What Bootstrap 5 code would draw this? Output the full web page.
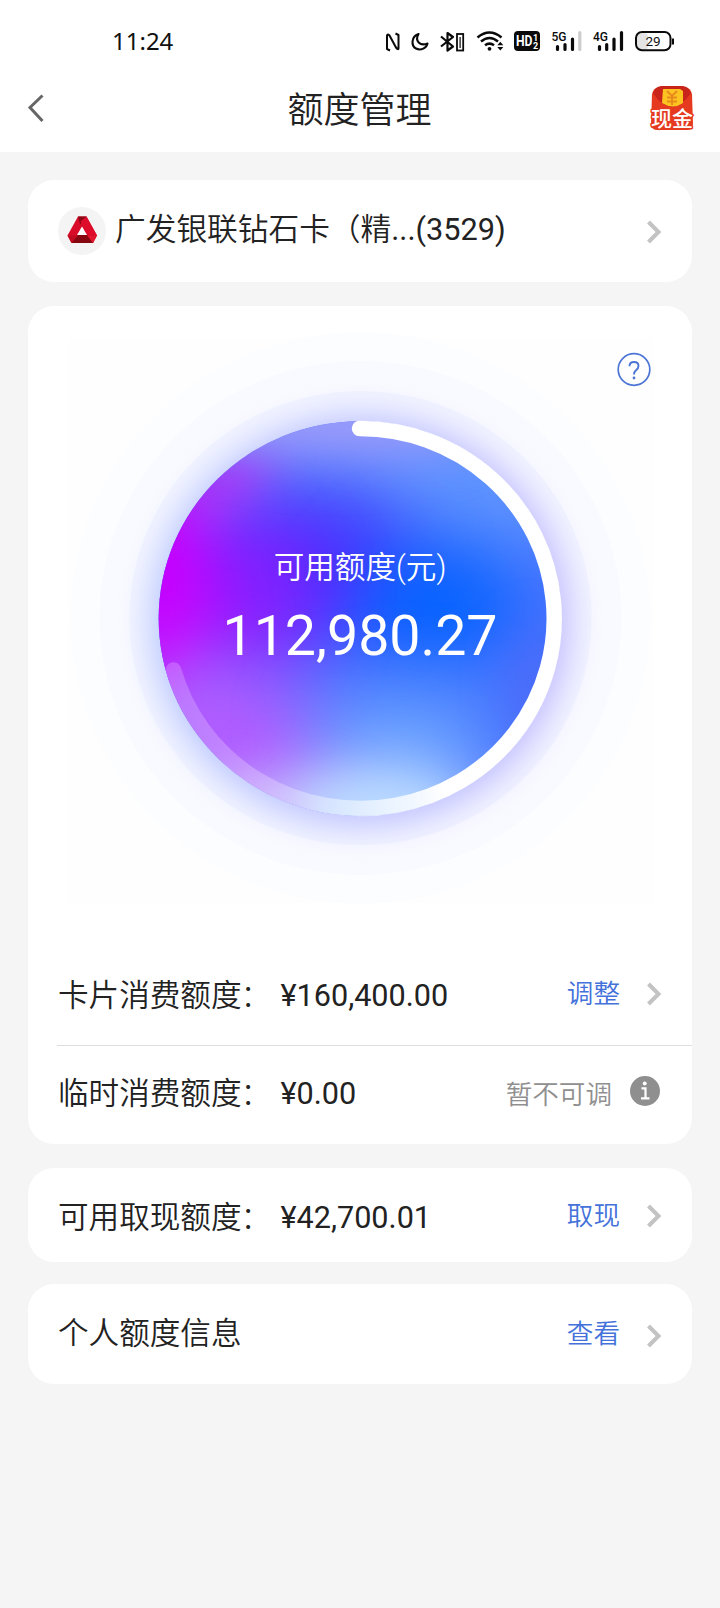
<!DOCTYPE html>
<html lang="zh-CN">
<head>
<meta charset="utf-8">
<meta name="viewport" content="width=device-width, initial-scale=1">
<title>额度管理</title>
<link href="https://cdn.jsdelivr.net/npm/bootstrap@5.3.0/dist/css/bootstrap.min.css" rel="stylesheet">
<style>
  body { background: #f5f5f5; color: #222; font-family: Roboto, "Noto Sans CJK SC", sans-serif; font-size: 30.6px; line-height: 44px; min-height: 1608px; font-weight: 400; }
  .zh { font-weight: 350; }
  .statusbar { height: 82px; padding: 0 40px 0 112px; }
  .clock { font: 400 24px/30px "Noto Sans", sans-serif; color: #111; }
  .titlebar { height: 70px; padding: 2px 24px 0 26px; }
  .titlebar h1 { font-size: 36px; line-height: 54px; font-weight: 350; }
  .panel { border: 0; border-radius: 26px; background: #fff; }
  .stack { padding: 28px 28px 0; }
  .line { padding: 0 30px; }
  .action { font-size: 26.6px; color: #4472da; font-weight: 350; text-decoration: none; }
  .muted { font-size: 26.6px; color: #8f8f8f; font-weight: 350; }
  .amount { width: 222.5px; }
  .colon { margin-left: -1px; font-weight: 300; }
  .gauge { display: grid; }
  .gauge > * { grid-area: 1 / 1; }
  .gauge filter { color-interpolation-filters: sRGB; }
  .balance { font-size: 55.5px; line-height: 62px; }
  svg { display: block; flex: none; }
</style>
</head>
<body>
<header class="bg-white">
  <div class="statusbar d-flex align-items-center justify-content-between">
    <span class="clock">11:24</span>
    <svg width="300" height="34" viewBox="380 24 300 34" fill="none" stroke="#0a0a0a">
      <!-- NFC -->
      <path d="M390 50.500L387 49V35.500Q387.500 33.500 389.500 35.500L396 47.500Q398.500 50.500 398.500 48V35L395.500 33.500" stroke-width="2" stroke-linejoin="round"/>
      <!-- moon -->
      <path d="M418.500 34C411 36.500 411 46 416 48.500C421 51 426.500 48 427.500 43.500C420 46.500 414.500 41 418.500 34Z" stroke-width="2.100" stroke-linejoin="round"/>
      <!-- bluetooth -->
      <path d="M441 36.500L453 46.500L447.500 50.500V33L453 37L441 46.500" stroke-width="2.200" stroke-linejoin="round"/>
      <rect x="457" y="34" width="6.200" height="16.500" stroke-width="1.800"/><path d="M460.100 37V48" stroke-width="1.200"/>
      <!-- wifi -->
      <path d="M477.500 37.500Q489.500 27.500 501.500 37.500M481 41.500Q489.500 34.500 498 41.500M485 45.300Q489.500 42 494 45.300" stroke-width="2.500"/>
      <circle cx="489.500" cy="48.800" r="1.900" fill="#0a0a0a" stroke="none"/>
      <path d="M497.300 45.300L500.300 41.800L503.300 45.300ZM497.300 47L500.300 50.500L503.300 47Z" fill="#0a0a0a" stroke="none"/>
      <!-- HD voice -->
      <rect x="514" y="31" width="26" height="20" rx="4" fill="#0a0a0a" stroke="none"/>
      <g fill="#fff" stroke="none" font-family="Roboto, sans-serif" font-weight="700">
        <text x="516" y="46" font-size="14" textLength="16.500" lengthAdjust="spacingAndGlyphs">HD</text>
        <text x="533" y="40.500" font-size="9">1</text><text x="533" y="48.500" font-size="9">2</text>
      </g>
      <!-- signal -->
      <g fill="#0a0a0a" stroke="none" font-family="Roboto, sans-serif" font-weight="500" font-size="12.500">
        <text x="551.500" y="41" textLength="15" lengthAdjust="spacingAndGlyphs">5G</text>
        <text x="593" y="41" textLength="15" lengthAdjust="spacingAndGlyphs">4G</text>
      </g>
      <g stroke-width="3.200" stroke-linecap="round">
        <path d="M557.500 46.500V49.500M565 44.500V49.500M572.500 39V49.500M599.500 46.500V49.500M606.700 44.500V49.500M614 39V49.500M621.500 32.500V49.500"/>
        <path d="M579.800 32.500V49.500" stroke="#ccc"/>
      </g>
      <!-- battery -->
      <rect x="637" y="33" width="11" height="17" rx="4" fill="#e4e4e4" stroke="none"/>
      <rect x="636" y="32" width="34.500" height="18.300" rx="6" stroke-width="2"/>
      <path d="M673 38.500V44.500" stroke-width="2"/>
      <text x="653" y="46" font-family="Roboto, sans-serif" font-size="13.500" text-anchor="middle" fill="#111" stroke="none">29</text>
    </svg>
  </div>
  <div class="titlebar row g-0 align-items-start">
    <div class="col-3" style="padding-top:7px"><svg width="20" height="34" viewBox="0 0 20 34" fill="none" stroke="#666" stroke-width="3"><path d="M16.500 4.500L4 16.500L16.500 30"/></svg></div>
    <h1 class="col-6 text-center mb-0" style="padding-right:3px">额度管理</h1>
    <div class="col-3 d-flex justify-content-end">
      <svg width="48" height="50" viewBox="648 84 48 50">
        <path d="M652 94Q653 88 660 87H684Q691 88 692 94L693 124Q692 130 687 130H656Q651 129 651 124Z" fill="#e63a20"/>
        <path d="M653 93Q655 87 661 86H683Q689 87 691 93Q682 106 672 107Q661 106 653 93Z" fill="#c9251a"/>
        <path d="M663 89H680L683 91V103Q673 110 662 103Z" fill="#fdc321"/>
        <path d="M667 91L672 96L677 91M672 96V105M667 97.500H677M667 101.500H677" fill="none" stroke="#e8891c" stroke-width="1.900"/>
        <text x="672" y="126" text-anchor="middle" font-family="'Noto Sans CJK SC', sans-serif" font-size="21" font-weight="500" fill="#fff" stroke="#e63a20" stroke-width="3" paint-order="stroke" stroke-linejoin="round">现金</text>
      </svg>
    </div>
  </div>
</header>

<main class="stack">
  <section class="panel card flex-row align-items-center line" style="height:102px">
    <svg width="48" height="48" viewBox="0 0 48 48">
      <circle cx="24" cy="24" r="24" fill="#f4f4f4"/>
      <path d="M20 9.500H28.500L39 28.500L35 36H13.500L9.500 28.500Z" fill="#d80c28"/>
      <path d="M20 9.500H28.500L25.500 15.500L22 17Z" fill="#8a0713"/>
      <path d="M28.500 9.500L39 28.500L30 29L22.500 14.500Z" fill="#dd0c2b"/>
      <path d="M13.500 36L19 28H30L35 36Z" fill="#86070f"/>
      <path d="M9.500 28.500L13.500 36L20 28.500Z" fill="#c00a20"/>
      <path d="M39 28.500L35 36L29 28.500Z" fill="#e0162e"/>
      <path d="M24 19.500L29 28H19Z" fill="#fff"/>
    </svg>
    <span class="zh" style="margin:0 0 2px 9px;font-size:30.700px">广发银联钻石卡（精<span class="fw-normal">...(3529)</span></span>
    <svg class="ms-auto" style="margin-top:2px" width="16" height="24" viewBox="0 0 16 24" fill="none" stroke="#c3c3c3" stroke-width="4"><path d="M2.500 2L12.500 12L2.500 22"/></svg>
  </section>

  <section class="panel card overflow-hidden" style="margin-top:24px;height:838px">
    <div class="gauge">
      <svg width="664" height="640" viewBox="28 306 664 640">
        <defs>
          <clipPath id="disc"><ellipse cx="360" cy="618.500" rx="201.300" ry="197.300"/></clipPath>
          <filter id="b20" x="-150%" y="-250%" width="400%" height="600%"><feGaussianBlur stdDeviation="25"/></filter>
          <filter id="b32" x="-150%" y="-250%" width="400%" height="600%"><feGaussianBlur stdDeviation="38"/></filter>
          <filter id="glow" x="-50%" y="-50%" width="200%" height="200%"><feGaussianBlur stdDeviation="15"/></filter>
          <linearGradient id="fade" gradientUnits="userSpaceOnUse" x1="174" y1="668" x2="416" y2="595">
            <stop offset="0" stop-color="#fff" stop-opacity=".2"/><stop offset=".3" stop-color="#fff" stop-opacity=".27"/>
            <stop offset=".58" stop-color="#fff" stop-opacity=".6"/><stop offset=".88" stop-color="#fff"/>
          </linearGradient>
          <linearGradient id="tint" x1="0" y1="0" x2="1" y2="0"><stop offset="0" stop-color="#bccaff"/><stop offset="1" stop-color="#c5bfff"/></linearGradient>
        </defs>
        <rect x="68" y="338" width="586" height="565" fill="#fefefe"/>
        <ellipse cx="360.500" cy="618" rx="290" ry="286" fill="#fcfdff"/>
        <ellipse cx="360.500" cy="618" rx="261" ry="257" fill="#f9faff"/>
        <ellipse cx="360.500" cy="618" rx="231" ry="227" fill="#f2f4ff"/>
        <ellipse cx="360.500" cy="621" rx="210" ry="206" fill="url(#tint)" filter="url(#glow)"/>
        <g clip-path="url(#disc)">
          <rect x="150" y="410" width="424" height="416" fill="#4a74ff"/>
          <ellipse cx="490" cy="470" rx="125" ry="85" fill="#6094ff" filter="url(#b32)"/>
          <ellipse cx="315" cy="570" rx="100" ry="65" fill="#4a2cff" filter="url(#b32)"/>
          <ellipse cx="435" cy="605" rx="85" ry="58" fill="#0062ff" filter="url(#b32)"/>
          <ellipse cx="235" cy="600" rx="75" ry="90" fill="#8a1cff" filter="url(#b32)"/>
          <ellipse cx="165" cy="590" rx="50" ry="130" fill="#c600ff" filter="url(#b20)"/>
          <ellipse cx="225" cy="480" rx="62" ry="24" transform="rotate(-35 225 480)" fill="#c02cf6" filter="url(#b20)"/>
          <ellipse cx="340" cy="422" rx="140" ry="36" fill="#a09efa" filter="url(#b20)"/>
          <ellipse cx="235" cy="740" rx="120" ry="75" transform="rotate(25 235 740)" fill="#b45cff" filter="url(#b32)"/>
          <ellipse cx="405" cy="730" rx="95" ry="42" fill="#5c9aff" filter="url(#b32)"/>
          <ellipse cx="265" cy="815" rx="95" ry="38" fill="#d0a4fc" filter="url(#b20)"/>
          <ellipse cx="385" cy="815" rx="100" ry="60" fill="#b8dcff" filter="url(#b32)"/>
          <ellipse cx="380" cy="820" rx="75" ry="32" fill="#c0dcff" filter="url(#b20)"/>
          <ellipse cx="538" cy="690" rx="22" ry="60" fill="#4c68f6" filter="url(#b20)"/>
        </g>
        <path d="M359.500 428.500A194 190 0 1 1 173.500 670" fill="none" stroke="url(#fade)" stroke-width="15.500" stroke-linecap="round"/>
      </svg>
      <div class="text-center text-white" style="padding-top:240px">
        <div class="zh">可用额度(元)</div>
        <div class="balance" style="margin-top:16px">112,980.27</div>
      </div>
      <a class="ms-auto" href="#" style="margin:46px 41px 0 0;height:36px" aria-label="说明">
        <svg width="34" height="36" viewBox="0 0 34 36"><circle cx="17" cy="17.500" r="15.800" fill="none" stroke="#4d75d6" stroke-width="1.700"/><path d="M12.500 14.300Q12.500 10 17 10T21.500 14Q21.500 16.300 19 18.300Q17 20 17 22.500" fill="none" stroke="#4d75d6" stroke-width="1.900"/><circle cx="17" cy="26" r="1.400" fill="#4d75d6"/></svg>
      </a>
    </div>
    <div class="line d-flex align-items-center" style="height:99px">
      <span class="zh amount">卡片消费额度<span class="colon">：</span></span><span>¥160,400.00</span>
      <a class="action ms-auto pb-1" href="#">调整</a>
      <svg style="margin:0 0 4px 26px" width="16" height="24" viewBox="0 0 16 24" fill="none" stroke="#c3c3c3" stroke-width="4"><path d="M2.500 2L12.500 12L2.500 22"/></svg>
    </div>
    <div style="height:1px;background:#dedede;margin-left:29px"></div>
    <div class="line d-flex align-items-center" style="height:96px">
      <span class="zh amount">临时消费额度<span class="colon">：</span></span><span>¥0.00</span>
      <span class="muted ms-auto" style="padding-top:2px">暂不可调</span>
      <svg style="margin:0 2px 6px 18px" width="30" height="30" viewBox="0 0 30 30"><circle cx="15" cy="15" r="15" fill="#8f8f8f"/><circle cx="14.700" cy="7.500" r="2" fill="#fff"/><path d="M11.500 12.300H15.500V22M11 22.300H19.500" fill="none" stroke="#fff" stroke-width="2.200"/></svg>
    </div>
  </section>

  <section class="panel card flex-row align-items-center line" style="margin-top:24px;height:94px">
    <span class="zh amount" style="padding-top:6px">可用取现额度<span class="colon">：</span></span><span style="padding-top:6px">¥42,700.01</span>
    <a class="action ms-auto" style="padding-top:1px" href="#">取现</a>
    <svg style="margin:2px 0 0 26px" width="16" height="24" viewBox="0 0 16 24" fill="none" stroke="#c3c3c3" stroke-width="4"><path d="M2.500 2L12.500 12L2.500 22"/></svg>
  </section>

  <section class="panel card flex-row align-items-center line" style="margin-top:22px;height:100px">
    <span class="zh">个人额度信息</span>
    <a class="action ms-auto" href="#">查看</a>
    <svg style="margin:4px 0 0 26px" width="16" height="24" viewBox="0 0 16 24" fill="none" stroke="#c3c3c3" stroke-width="4"><path d="M2.500 2L12.500 12L2.500 22"/></svg>
  </section>
</main>
<script src="https://cdn.jsdelivr.net/npm/bootstrap@5.3.0/dist/js/bootstrap.bundle.min.js"></script>
</body>
</html>
